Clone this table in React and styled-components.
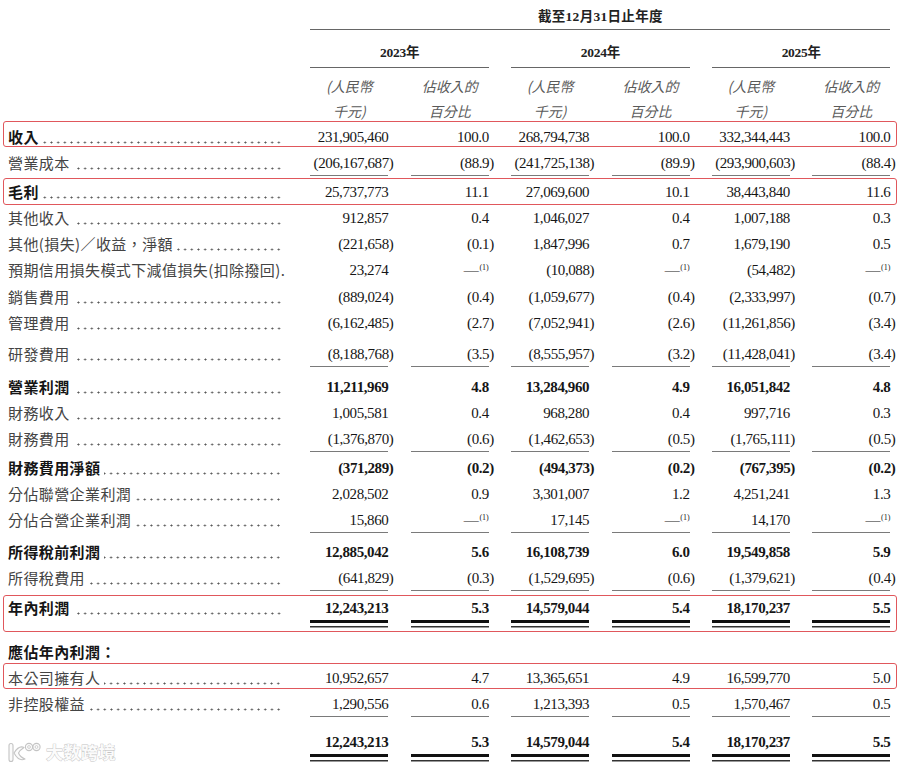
import { createGlobalStyle, styled } from 'styled-components';

const GlobalStyle = createGlobalStyle`
  html, body {
    margin: 0;
    padding: 0;
    background: #fff;
  }
  body {
    font-family: 'Liberation Serif', 'Noto Sans CJK TC', serif;
  }
`;

const Page = styled.div`
  position: relative;
  width: 900px;
  height: 768px;
  overflow: hidden;
  background: #fff;
`;

const Row = styled.div`
  position: relative;
  display: grid;
  grid-template-columns: 280px repeat(6, 78px);
  column-gap: 22.4px;
  padding-left: 8px;
  margin-top: ${p => p.$mt || 0}px;
  height: ${p => p.$h || (p.$line === 'double' ? 34 : 26)}px;

  ${p =>
    p.$box &&
    `
    &::after {
      content: '';
      position: absolute;
      left: 3px;
      right: 3px;
      top: ${p.$box[0]}px;
      bottom: ${p.$box[1]}px;
      border: 1.6px solid #e0575c;
      border-radius: 3px;
      pointer-events: none;
    }
  `}
`;

const TitleCell = styled.div`
  grid-column: 2 / 8;
  height: 30px;
  padding-top: 4px;
  box-sizing: border-box;
  line-height: 26px;
  text-align: center;
  font-family: 'Liberation Serif', 'Noto Sans CJK TC', serif;
  font-size: 13.5px;
  letter-spacing: 0.3px;
  font-weight: 700;
  color: #222;
  background: linear-gradient(#666, #666) left 0 bottom 0 / 100% 1.5px no-repeat;
`;

const YearCell = styled.div`
  grid-column: span 2;
  height: 38px;
  padding-top: 10px;
  box-sizing: border-box;
  line-height: 26px;
  text-align: center;
  font-family: 'Liberation Serif', 'Noto Sans CJK TC', serif;
  font-size: 13.5px;
  letter-spacing: -0.3px;
  font-weight: 700;
  color: #222;
  background: linear-gradient(#666, #666) left 0 bottom 0 / 100% 1.5px no-repeat;
`;

const SubCell = styled.div`
  height: 56px;
  padding-top: 6px;
  box-sizing: border-box;
  line-height: 25px;
  text-align: center;
  font-family: 'Noto Sans CJK TC', sans-serif;
  font-size: 14px;
  font-style: italic;
  color: #5a5a5a;
  white-space: nowrap;
`;

const LabelCell = styled.div`
  display: flex;
  align-items: stretch;
  line-height: 26px;
  padding-right: 5px;
  min-width: 0;
`;

const LabelText = styled.span`
  flex-shrink: 0;
  font-family: 'Noto Sans CJK TC', sans-serif;
  font-size: 15px;
  letter-spacing: 0.4px;
  font-weight: ${p => (p.$bold ? 700 : 400)};
  color: ${p => (p.$bold ? '#151515' : '#444')};
  white-space: nowrap;
`;

// dot leader, anchored to the right edge of the label column
const Leader = styled.span`
  flex: 1;
  min-width: 0;
  margin-left: 4px;
  background-image: radial-gradient(circle, #555 0.85px, transparent 1.15px);
  background-size: 6.7px 3px;
  background-repeat: repeat-x;
  background-position: right 1px top 17px;
`;

const lineBg = {
  single: 'linear-gradient(#7a7a7a, #7a7a7a) left 0 bottom 0 / 100% 1.5px no-repeat',
  double:
    'linear-gradient(#111, #111) left 0 bottom 6px / 100% 3px no-repeat, linear-gradient(#333, #333) left 0 bottom 1.5px / 100% 1.5px no-repeat',
};

const Cell = styled.div`
  line-height: 26px;
  text-align: right;
  white-space: nowrap;
  font-family: 'Liberation Serif', serif;
  font-size: 15px;
  letter-spacing: -0.4px;
  font-weight: ${p => (p.$bold ? 700 : 400)};
  color: #161616;
  background: ${p => (p.$line ? lineBg[p.$line] : 'none')};
`;

const Num = styled.span`
  display: inline-block;
  margin-right: ${p => (p.$neg ? '-5px' : '0')};
`;

const Sup = styled.sup`
  font-size: 8px;
  letter-spacing: 0;
  vertical-align: 5px;
  line-height: 0;
  margin-left: 1px;
  font-weight: 400;
  color: #222;
`;

const Watermark = styled.div`
  position: absolute;
  left: 7px;
  top: 739px;
  display: flex;
  align-items: center;
  gap: 5px;
  pointer-events: none;
`;

const WatermarkText = styled.span`
  font-family: 'Noto Sans CJK SC', sans-serif;
  font-size: 17px;
  font-weight: 700;
  color: #fbfbfb;
  -webkit-text-stroke: 0.9px #c4c4c4;
  paint-order: stroke fill;
  letter-spacing: 0.5px;
`;

const D = 'dash';

const rows = [
  { label: '收入', bold: true, vals: ['231,905,460', '100.0', '268,794,738', '100.0', '332,344,443', '100.0'], box: [-3, 3] },
  { label: '營業成本', vals: ['(206,167,687)', '(88.9)', '(241,725,138)', '(89.9)', '(293,900,603)', '(88.4)'], line: 'single' },
  { label: '毛利', bold: true, mt: 3, vals: ['25,737,773', '11.1', '27,069,600', '10.1', '38,443,840', '11.6'], box: [-1, 0] },
  { label: '其他收入', vals: ['912,857', '0.4', '1,046,027', '0.4', '1,007,188', '0.3'] },
  { label: '其他(損失)／收益，淨額', vals: ['(221,658)', '(0.1)', '1,847,996', '0.7', '1,679,190', '0.5'] },
  { label: '預期信用損失模式下減值損失(扣除撥回).', noDots: true, vals: ['23,274', D, '(10,088)', D, '(54,482)', D] },
  { label: '銷售費用', mt: 1, vals: ['(889,024)', '(0.4)', '(1,059,677)', '(0.4)', '(2,333,997)', '(0.7)'] },
  { label: '管理費用', vals: ['(6,162,485)', '(2.7)', '(7,052,941)', '(2.6)', '(11,261,856)', '(3.4)'] },
  { label: '研發費用', mt: 5, vals: ['(8,188,768)', '(3.5)', '(8,555,957)', '(3.2)', '(11,428,041)', '(3.4)'], line: 'single' },
  { label: '營業利潤', bold: true, boldVals: true, mt: 7, vals: ['11,211,969', '4.8', '13,284,960', '4.9', '16,051,842', '4.8'] },
  { label: '財務收入', vals: ['1,005,581', '0.4', '968,280', '0.4', '997,716', '0.3'] },
  { label: '財務費用', vals: ['(1,376,870)', '(0.6)', '(1,462,653)', '(0.5)', '(1,765,111)', '(0.5)'], line: 'single' },
  { label: '財務費用淨額', bold: true, boldVals: true, mt: 3, vals: ['(371,289)', '(0.2)', '(494,373)', '(0.2)', '(767,395)', '(0.2)'] },
  { label: '分佔聯營企業利潤', vals: ['2,028,502', '0.9', '3,301,007', '1.2', '4,251,241', '1.3'] },
  { label: '分佔合營企業利潤', vals: ['15,860', D, '17,145', D, '14,170', D], line: 'single' },
  { label: '所得稅前利潤', bold: true, boldVals: true, mt: 6, vals: ['12,885,042', '5.6', '16,108,739', '6.0', '19,549,858', '5.9'] },
  { label: '所得稅費用', vals: ['(641,829)', '(0.3)', '(1,529,695)', '(0.6)', '(1,379,621)', '(0.4)'], line: 'single' },
  { label: '年內利潤', bold: true, boldVals: true, mt: 4, vals: ['12,243,213', '5.3', '14,579,044', '5.4', '18,170,237', '5.5'], line: 'double', box: [0, -3] },
  { label: '應佔年內利潤：', bold: true, noDots: true, mt: 10, vals: [] },
  { label: '本公司擁有人', vals: ['10,952,657', '4.7', '13,365,651', '4.9', '16,599,770', '5.0'], box: [-2, 2] },
  { label: '非控股權益', vals: ['1,290,556', '0.6', '1,213,393', '0.5', '1,570,467', '0.5'], line: 'single' },
  { label: '', boldVals: true, noDots: true, mt: 12, vals: ['12,243,213', '5.3', '14,579,044', '5.4', '18,170,237', '5.5'], line: 'double' },
];

const Value = ({ v }) => {
  if (v === D) {
    return (
      <Num>
        —<Sup>(1)</Sup>
      </Num>
    );
  }
  return <Num $neg={v.startsWith('(')}>{v}</Num>;
};

const LogoMark = () => (
  <svg width="34" height="22" viewBox="0 0 34 22">
    <g fill="#fbfbfb" stroke="#c4c4c4" strokeWidth="1.1" strokeLinejoin="round">
      <path d="M2 4.5 Q2 2.5 4 2.5 Q6 2.5 6 4.5 L6 18.5 Q6 20.5 4 20.5 Q2 20.5 2 18.5 Z" />
      <path d="M7 12 Q12 4 17 6.5 Q13 9 11.5 12 Q13 16 18 18 Q12 21 7 12 Z" />
      <circle cx="22" cy="6" r="3.6" />
      <circle cx="29.5" cy="6" r="3.6" />
    </g>
    <circle cx="22" cy="6" r="1.4" fill="#fff" stroke="#c4c4c4" strokeWidth="0.8" />
    <circle cx="29.5" cy="6" r="1.4" fill="#fff" stroke="#c4c4c4" strokeWidth="0.8" />
  </svg>
);

export default function App() {
  return (
    <>
      <GlobalStyle />
      <Page>
        <Row $h={30}>
          <div />
          <TitleCell>截至12月31日止年度</TitleCell>
        </Row>
        <Row $h={38}>
          <div />
          <YearCell>2023年</YearCell>
          <YearCell>2024年</YearCell>
          <YearCell>2025年</YearCell>
        </Row>
        <Row $h={56}>
          <div />
          {[0, 1, 2].map(i => [
            <SubCell key={`a${i}`}>
              (人民幣
              <br />
              千元)
            </SubCell>,
            <SubCell key={`b${i}`}>
              佔收入的
              <br />
              百分比
            </SubCell>,
          ])}
        </Row>

        {rows.map((r, idx) => (
          <Row key={idx} $mt={r.mt} $line={r.line} $box={r.box}>
            <LabelCell>
              <LabelText $bold={r.bold}>{r.label}</LabelText>
              {!r.noDots && <Leader />}
            </LabelCell>
            {r.vals.map((v, i) => (
              <Cell key={i} $bold={r.boldVals} $line={r.line}>
                <Value v={v} />
              </Cell>
            ))}
          </Row>
        ))}

        <Watermark>
          <LogoMark />
          <WatermarkText>大数跨境</WatermarkText>
        </Watermark>
      </Page>
    </>
  );
}
